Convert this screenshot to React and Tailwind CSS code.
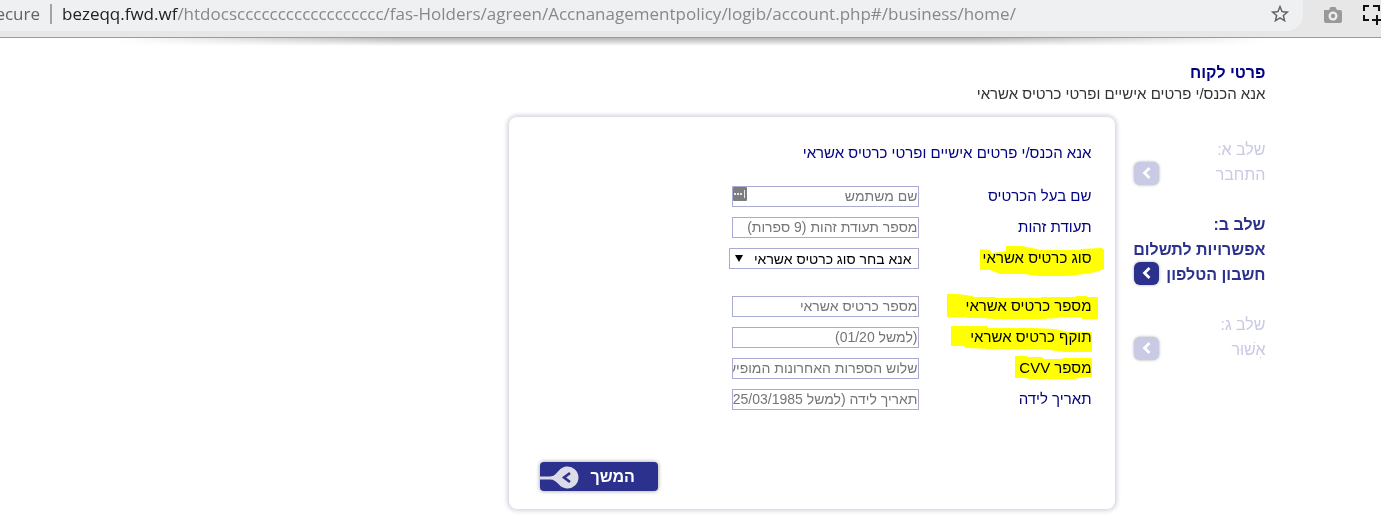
import React from "react";

const personalFields = [
  { id: "name", label: "שם בעל הכרטיס", placeholder: "שם משתמש", badge: true },
  { id: "idnum", label: "תעודת זהות", placeholder: "מספר תעודת זהות (9 ספרות)" },
];

const cardFields = [
  {
    id: "card",
    label: "מספר כרטיס אשראי",
    placeholder: "מספר כרטיס אשראי",
    mark: { w: 151, h: 25, right: "-right-1.5", d: "M0 0h11l15 2v1h21l4 1h42l2-1h32l3-1h10v1h11v22h-16v-2h-20l-3 1-18 1H48l-14-1H20v-1H0z" },
  },
  {
    id: "expiry",
    label: "תוקף כרטיס אשראי",
    placeholder: "(למשל 01/20)",
    mark: { w: 141, h: 28, right: "right-0", d: "M0 1h36v2h48l20 1 14 3h23v20h-28l-22-3H40l-24-1-4-2H0z" },
  },
  {
    id: "cvv",
    label: "מספר CVV",
    placeholder: "שלוש הספרות האחרונות המופיעות",
    mark: { w: 77, h: 24, right: "right-0", d: "M0 0h12v1h15l2 2h17l3-1h28v19h-6l-12 2H15l-6-1H0z" },
  },
  { id: "birth", label: "תאריך לידה", placeholder: "תאריך לידה (למשל 25/03/1985)" },
];

const steps = [
  { title: "שלב א:", lines: ["התחבר"] },
  { title: "שלב ב:", lines: ["אפשרויות לתשלום", "חשבון הטלפון"], active: true },
  { title: "שלב ג:", lines: ["אִשׁוּר"] },
];

function AddressBar() {
  return (
    <header dir="ltr" className="flex h-[38px] items-start overflow-hidden border-b border-[#9b9b9b] bg-[#e7e7e7]">
      <div className="flex h-[31px] min-w-0 flex-1 items-center rounded-br-[16px] bg-[#eef0f2] pr-3 pb-[3px] font-['Open_Sans',sans-serif] text-[17px] leading-7 whitespace-nowrap">
        <span className="flex w-10 shrink-0 justify-end overflow-hidden text-[#5f6368]">ecure</span>
        <span className="mx-[10px] h-5 w-0.5 shrink-0 bg-[#a0a3a7]" />
        <span className="min-w-0 flex-1 overflow-hidden text-[#85898d]">
          <span className="text-[#202124]">bezeqq.fwd.wf</span>
          /htdocscccccccccccccccccc/fas-Holders/agreen/Accnanagementpolicy/logib/account.php#/business/home/
        </span>
        <button aria-label="Bookmark" className="shrink-0">
          <svg width="22" height="22" viewBox="0 0 24 24" fill="#5f6368">
            <path d="M22 9.24l-7.19-.62L12 2 9.19 8.63 2 9.24l5.46 4.73L5.82 21 12 17.27 18.18 21l-1.63-7.03L22 9.24zM12 15.4l-3.76 2.27 1-4.28-3.32-2.88 4.38-.38L12 6.1l1.71 4.04 4.38.38-3.32 2.88 1 4.28L12 15.4z" />
          </svg>
        </button>
      </div>
      <div className="flex h-[29px] shrink-0 items-center gap-5 pl-5">
        <button aria-label="Camera">
          <svg width="20" height="18" viewBox="0 0 20 18">
            <path d="M2 4h4l1.500-3h5L14 4h3q2 0 2 2v9q0 2-2 2H3q-2 0-2-2V4z" fill="#999" />
            <circle cx="10" cy="10" r="4.500" fill="#eee" />
            <circle cx="10" cy="10" r="2.200" fill="#999" />
          </svg>
        </button>
        <button aria-label="Capture area">
          <svg width="18" height="22" viewBox="0 0 18 22" fill="none" stroke="#111" strokeWidth="2">
            <path d="M1 7V2h5M10 2h6v5M1 11v5h5M9 16h9M14 11v10" />
          </svg>
        </button>
      </div>
    </header>
  );
}

function Label({ id, children, mark }) {
  return (
    <label htmlFor={id} className="relative w-[173px] shrink-0 text-[15px] leading-5 text-[#000080]">
      {children}
      {mark && (
        <svg width={mark.w} height={mark.h} className={"absolute -top-0.5 mix-blend-multiply " + mark.right}>
          <path d={mark.d} fill="#ffff00" />
        </svg>
      )}
    </label>
  );
}

function Field({ id, label, placeholder, badge, mark }) {
  return (
    <div className="flex">
      <Label id={id} mark={mark}>{label}</Label>
      <div className="relative">
        <input
          id={id}
          type="text"
          placeholder={placeholder}
          className="block h-[21px] w-[187px] border border-[#a9abd3] bg-white text-[14px] text-black outline-none placeholder:text-[#757575]"
        />
        {badge && (
          <svg width="14" height="14" className="absolute top-px left-px">
            <rect width="14" height="14" rx="1" fill="#7d7d7d" />
            <path d="M1 6h2v2H1zM4 6h2v2H4zM7 6h2v2H7zM11 3h1v8h-1z" fill="#e8e8e8" />
          </svg>
        )}
      </div>
    </div>
  );
}

function Step({ title, lines, active }) {
  return (
    <li className={active ? "font-bold text-[#2b318d]" : "text-[#c9cae3]"}>
      <div>{title}</div>
      {lines.map((line, i) => (
        <div key={line} className="flex items-start justify-between whitespace-nowrap">
          <span>{line}</span>
          {i === lines.length - 1 && (
            <svg width="25" height="23" viewBox="0 0 25 23" className="ml-0.5 rounded-md bg-current shadow-[0_0_3px_#aaa]">
              <path d="M15.500 6L10.500 11l5 5" fill="none" stroke="#fff" strokeWidth="2.800" />
            </svg>
          )}
        </div>
      ))}
    </li>
  );
}

export default function App() {
  return (
    <div className="min-h-screen bg-white font-['Liberation_Sans',Arial,sans-serif]">
      <AddressBar />
      <div dir="rtl" className="mx-auto max-w-[1150px]">
        <div className="h-2 bg-linear-to-b from-[#b4b4b4] to-white [mask-image:linear-gradient(to_right,transparent,black_25%,black_75%,transparent)]" />
        <div className="pt-4">
          <h1 className="text-[16px] leading-[22px] font-bold text-[#000080]">פרטי לקוח</h1>
          <p className="text-[15px] leading-5 text-[#333]">אנא הכנס/י פרטים אישיים ופרטי כרטיס אשראי</p>
        </div>

        <div className="mt-[13px] flex items-start gap-[17px] pb-4">
          <ol className="w-[134px] shrink-0 space-y-[25px] pt-5 text-[16px] leading-[25px]">
            {steps.map((s) => (
              <Step key={s.title} {...s} />
            ))}
          </ol>

          <form
            onSubmit={(e) => e.preventDefault()}
            className="w-full max-w-[606px] rounded-lg bg-white pt-[26px] pr-[23px] pb-[18px] pl-[31px] shadow-[0_0_4px_2px_#d5d5df]"
          >
            <p className="text-[15px] leading-5 text-[#000080]">אנא הכנס/י פרטים אישיים ופרטי כרטיס אשראי</p>

            <div className="mt-[23px] space-y-[10px]">
              {personalFields.map((f) => (
                <Field key={f.id} {...f} />
              ))}
              <div className="flex">
                <Label
                  id="type"
                  mark={{ w: 124, h: 32, right: "-right-3", d: "M0 3l10 1 2 3 14-2V0h16l15 3 2 1h40l2-1 21-1 2 2v19l-8 3-12 2-16 2H58l-14-2H20l-10-4H0z" }}
                >
                  סוג כרטיס אשראי
                </Label>
                <div className="relative">
                  <select
                    id="type"
                    className="block h-[21px] w-[190px] appearance-none border border-[#a9abd3] bg-white pr-1.5 text-[14px] text-black outline-none"
                  >
                    <option>אנא בחר סוג כרטיס אשראי</option>
                  </select>
                  <svg width="8" height="7" className="pointer-events-none absolute top-[7px] left-[6px]">
                    <path d="M0 0h8L4 7z" fill="#000" />
                  </svg>
                </div>
              </div>
            </div>

            <div className="mt-[27px] space-y-[10px]">
              {cardFields.map((f) => (
                <Field key={f.id} {...f} />
              ))}
            </div>

            <div className="mt-[52px] flex justify-end">
              <button
                type="submit"
                className="flex h-[29px] w-[118px] items-center justify-end gap-3 rounded-sm bg-[#2b318d] text-[16px] font-bold text-white shadow-[0_0_4px_#999]"
              >
                המשך
                <svg width="39" height="29" viewBox="0 0 39 29">
                  <path d="M0 14.500h10c4 0 6-3 9-6a11 11 0 1 1 0 14c-3-3-5-5-9-5H0z" fill="#dcdce8" />
                  <path d="M30 11l-6 4.500 6 4.500" fill="none" stroke="#2b318d" strokeWidth="2.600" />
                </svg>
              </button>
            </div>
          </form>
        </div>
      </div>
    </div>
  );
}
